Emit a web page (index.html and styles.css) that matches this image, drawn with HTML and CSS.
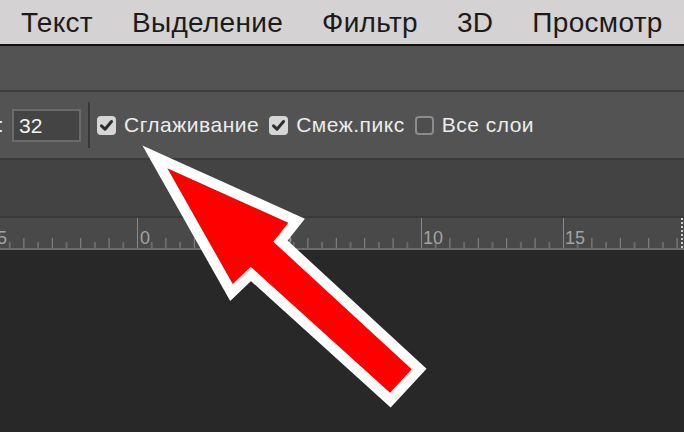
FILE: index.html
```html
<!DOCTYPE html>
<html lang="ru">
<head>
<meta charset="UTF-8">
<title>Параметры инструмента</title>
<link rel="stylesheet" href="styles.css">
</head>
<body>
<div class="menubar">
  <span class="menu-item">Текст</span>
  <span class="menu-item">Выделение</span>
  <span class="menu-item">Фильтр</span>
  <span class="menu-item">3D</span>
  <span class="menu-item">Просмотр</span>
</div>

<div class="appbar"></div>

<div class="options">
  <span class="colon">:</span>
  <div class="field">32</div>
  <div class="divider"></div>
  <label class="check">
    <span class="box on"><svg viewBox="0 0 19 19"><path d="M4.5 9.8 L8 13.2 L14.5 5.5" /></svg></span>
    Сглаживание
  </label>
  <label class="check">
    <span class="box on"><svg viewBox="0 0 19 19"><path d="M4.5 9.8 L8 13.2 L14.5 5.5" /></svg></span>
    Смеж.пикс
  </label>
  <label class="check">
    <span class="box"></span>
    Все слои
  </label>
</div>

<div class="tabbar"></div>

<div class="ruler">
  <svg width="684" height="30" viewBox="0 0 684 30">
    <defs>
      <pattern id="ticks" x="-5" y="0" width="28.4" height="30" patternUnits="userSpaceOnUse">
        <rect x="0" y="20" width="1" height="10" fill="#8a8a8a" />
        <rect x="14.2" y="24" width="1" height="6" fill="#8a8a8a" />
      </pattern>
    </defs>
    <rect x="0" y="0" width="684" height="30" fill="url(#ticks)" />
    <g fill="#8a8a8a">
      <rect x="-5" y="0" width="1" height="30" />
      <rect x="137" y="0" width="1" height="30" />
      <rect x="279" y="0" width="1" height="30" />
      <rect x="421" y="0" width="1" height="30" />
      <rect x="563" y="0" width="1" height="30" />
    </g>
    <g class="ruler-labels">
      <text x="-3" y="26">5</text>
      <text x="140" y="26">0</text>
      <text x="282" y="26">5</text>
      <text x="423" y="26">10</text>
      <text x="565" y="26">15</text>
    </g>
    <line x1="682" y1="0" x2="682" y2="30" stroke="#d0d0d0" stroke-width="2" stroke-dasharray="2 2" />
  </svg>
</div>

<div class="canvas"></div>

<svg class="arrow" width="684" height="432" viewBox="0 0 684 432">
  <polygon points="167.3,168.3 288.3,222.7 273.3,241.7 411.7,369.3 390,392.7 250.7,266.7 232.7,284"
           fill="#ff0000" stroke="#ffffff" stroke-width="21" stroke-linejoin="miter" stroke-miterlimit="6"
           paint-order="stroke" />
</svg>
</body>
</html>
```

FILE: styles.css
```css
body {
  margin: 0;
  width: 684px;
  height: 432px;
  overflow: hidden;
  position: relative;
  background-color: #282828;
  font-family: "Liberation Sans", Arial, sans-serif;
}
.menubar {
  display: flex;
  align-items: center;
  gap: 39px;
  height: 44px;
  padding-left: 21px;
  background-color: #d4d2d2;
  border-bottom: 2px solid #111111;
  color: #1b1b1b;
  font-size: 28px;
  letter-spacing: 0.3px;
}
.menu-item {
  white-space: nowrap;
  padding-top: 1px;
}
.appbar {
  height: 44px;
  background-color: #535353;
  border-bottom: 2px solid #3c3c3c;
}
.options {
  display: flex;
  align-items: center;
  height: 66px;
  background-color: #535353;
  border-bottom: 2px solid #3a3a3a;
  color: #ececec;
  font-size: 21px;
  letter-spacing: 0.5px;
}
.colon {
  margin-left: -2px;
  width: 14px;
  font-size: 20px;
}
.field {
  box-sizing: border-box;
  width: 69px;
  height: 33px;
  padding-left: 5px;
  border: 2px solid #6a6a6a;
  background-color: #444444;
  line-height: 29px;
  font-size: 21px;
  letter-spacing: 0;
  color: #f2f2f2;
}
.divider {
  width: 2px;
  height: 46px;
  margin-left: 7px;
  margin-right: 7px;
  background-color: #383838;
}
.check {
  display: flex;
  align-items: center;
  gap: 8px;
  margin-right: 10px;
  white-space: nowrap;
}
.box {
  box-sizing: border-box;
  flex: none;
  width: 19px;
  height: 19px;
  border-radius: 4px;
  border: 2px solid #8c8c8c;
  background-color: #4e4e4e;
}
.box.on {
  border: none;
  background-color: #d6d6d6;
}
.box svg {
  display: block;
  width: 19px;
  height: 19px;
}
.box path {
  fill: none;
  stroke: #2e2e2e;
  stroke-width: 3;
  stroke-linecap: round;
  stroke-linejoin: round;
}
.tabbar {
  height: 56px;
  background-color: #434343;
  border-bottom: 2px solid #393939;
}
.ruler {
  height: 30px;
  background-color: #494949;
  border-bottom: 2px solid #6c6c6c;
}
.ruler svg {
  display: block;
}
.ruler-labels {
  fill: #a3a3a3;
  font-family: "Liberation Sans", Arial, sans-serif;
  font-size: 18px;
}
.canvas {
  height: 182px;
  background-color: #282828;
}
.arrow {
  position: absolute;
  top: 0;
  left: 0;
  pointer-events: none;
}
```
